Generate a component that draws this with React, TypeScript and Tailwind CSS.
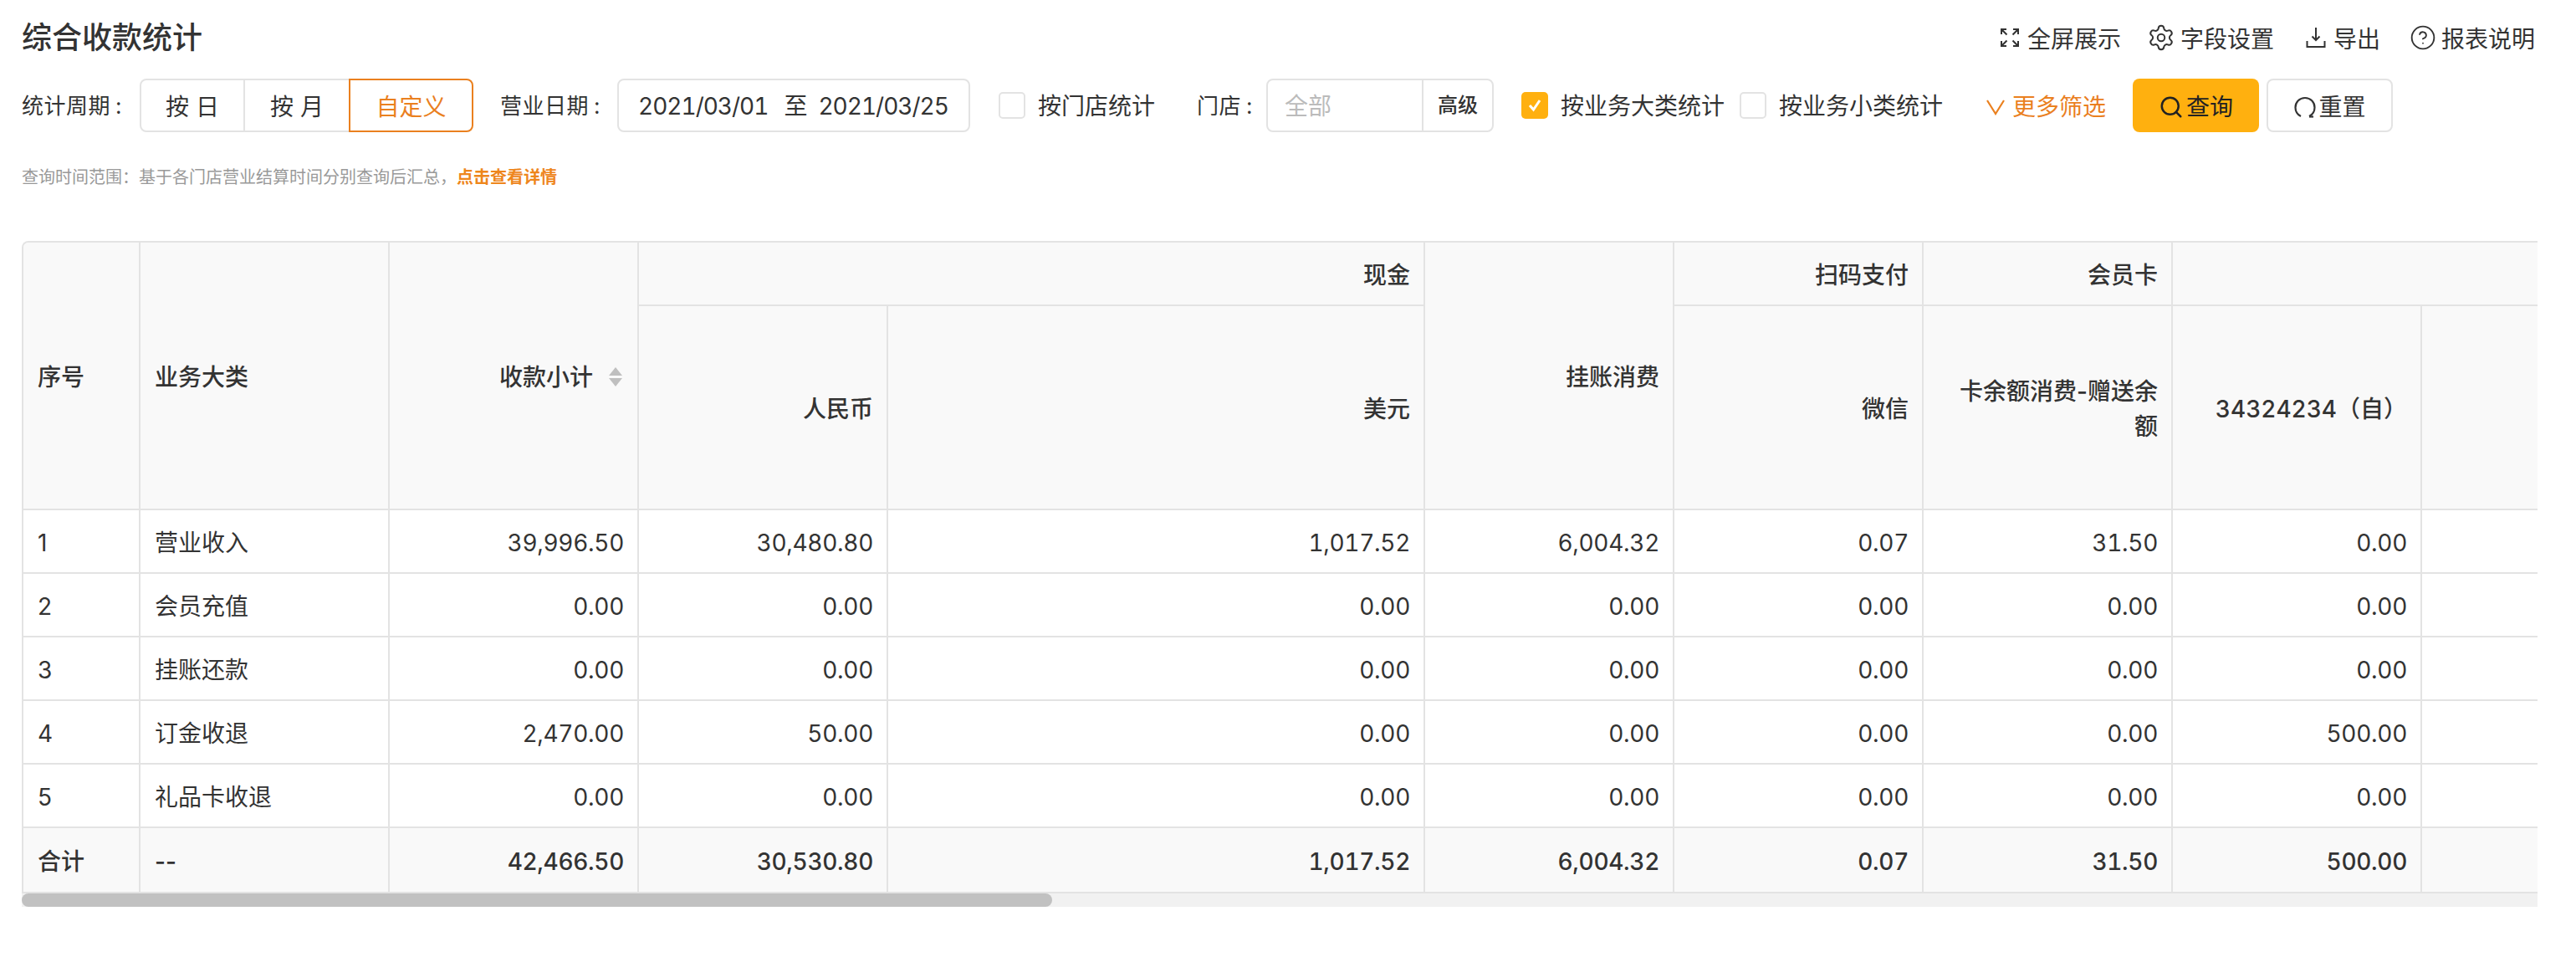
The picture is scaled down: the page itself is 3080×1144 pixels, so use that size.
import { CircleHelp, Search, Settings } from "lucide-react";
import type { ReactNode } from "react";

const rows = [
  ["1", "营业收入", "39,996.50", "30,480.80", "1,017.52", "6,004.32", "0.07", "31.50", "0.00"],
  ["2", "会员充值", "0.00", "0.00", "0.00", "0.00", "0.00", "0.00", "0.00"],
  ["3", "挂账还款", "0.00", "0.00", "0.00", "0.00", "0.00", "0.00", "0.00"],
  ["4", "订金收退", "2,470.00", "50.00", "0.00", "0.00", "0.00", "0.00", "500.00"],
  ["5", "礼品卡收退", "0.00", "0.00", "0.00", "0.00", "0.00", "0.00", "0.00"],
];
const totals = ["合计", "--", "42,466.50", "30,530.80", "1,017.52", "6,004.32", "0.07", "31.50", "500.00"];
const colWidths = [140, 298, 298, 298, 642, 298, 298, 298, 298, 298];

const thClass = "bg-[#f9f9f9] border-r-2 border-b-2 border-[#e3e3e3] pl-[17px] pr-[16px] pt-[3px] font-medium align-middle leading-[42px]";
const tdClass = "border-r-2 border-b-2 border-[#e3e3e3] pl-[17px] pr-[16px] pt-[3px] align-middle";
const numClass = "text-right tabular-nums tracking-[-0.3px]";

function Check({ checked, label }: { checked?: boolean; label: string }) {
  return (
    <div className="flex items-center gap-[15px]">
      <span
        className={
          checked
            ? "w-8 h-8 rounded-[5px] bg-[#ffb00f] flex items-center justify-center"
            : "w-8 h-8 rounded-[5px] border-2 border-[#e3e3e3] bg-white"
        }
      >
        {checked && (
          <svg width="20" height="20" viewBox="0 0 20 20" fill="none" stroke="white" strokeWidth="3">
            <path d="M4 10l4.500 5L16 4" />
          </svg>
        )}
      </span>
      <span className="pt-[2px] text-[28px] whitespace-nowrap">{label}</span>
    </div>
  );
}

function Action({ icon, label }: { icon: ReactNode; label: string }) {
  return (
    <div className="flex items-center gap-[9px] text-[28px]">
      {icon}
      <span className="pt-[3px]">{label}</span>
    </div>
  );
}

function FieldLabel({ text, className }: { text: string; className: string }) {
  return (
    <span className={`${className} flex items-center text-[26px] tracking-[0.5px] whitespace-nowrap`}>
      {text}
      <span className="ml-[6px]">:</span>
    </span>
  );
}

function App() {
  return (
    <div
      className="w-[3080px] h-[1144px] bg-white text-[#333333] px-[26px] overflow-hidden"
      style={{ fontFamily: 'Inter, "Noto Sans CJK SC", sans-serif' }}
    >
      <header className="h-[90px] flex items-center justify-between pr-[23px]">
        <h1 className="text-[36px] font-medium">综合收款统计</h1>
        <div className="flex items-center gap-[38px]">
          <div className="-mr-[4px]">
            <Action
              label="全屏展示"
              icon={
                <svg width="24" height="24" viewBox="0 0 24 24" fill="none" stroke="#333" strokeWidth="2">
                  <path d="M2 8V2h6M2 2l6.500 6.500M22 8V2h-6M22 2l-6.500 6.500M2 16v6h6M2 22l6.500-6.500M22 16v6h-6M22 22l-6.500-6.500" />
                </svg>
              }
            />
          </div>
          <Action label="字段设置" icon={<Settings size={34} strokeWidth={1.4} className="-mx-[3px]" />} />
          <Action
            label="导出"
            icon={
              <svg width="24" height="26" viewBox="0 0 24 26" fill="none" stroke="#333" strokeWidth="2">
                <path d="M12 1v15M7.500 11.500 12 16l4.500-4.500M1.500 17v7h21v-7" />
              </svg>
            }
          />
          <Action label="报表说明" icon={<CircleHelp size={32} strokeWidth={1.4} className="-mx-[3px]" />} />
        </div>
      </header>

      <div className="mt-1 h-16 flex items-center">
        <FieldLabel text="统计周期" className="w-[141px]" />
        <div className="flex h-16 text-[28px]">
          <div className="w-[126px] pt-[3px] border-2 border-[#e3e3e3] rounded-l-[8px] flex items-center justify-center">按 日</div>
          <div className="w-[126px] pt-[3px] border-y-2 border-r-2 border-[#e3e3e3] flex items-center justify-center">按 月</div>
          <div className="w-[149px] pt-[3px] border-2 border-[#ea801f] rounded-r-[8px] -ml-[2px] text-[#ea801f] flex items-center justify-center">自定义</div>
        </div>
        <FieldLabel text="营业日期" className="ml-[32px] w-[140px]" />
        <div className="w-[422px] h-16 pt-[2px] border-2 border-[#e3e3e3] rounded-[8px] flex items-center gap-[19px] pl-[23px] text-[28px] tabular-nums tracking-[-1px] whitespace-nowrap">
          <span>2021/03/01</span>
          <span className="-mr-[5px]">至</span>
          <span>2021/03/25</span>
        </div>
        <div className="ml-[34px]">
          <Check label="按门店统计" />
        </div>
        <FieldLabel text="门店" className="ml-[50px] w-[83px]" />
        <div className="w-[272px] h-16 border-2 border-[#e3e3e3] rounded-[8px] flex items-center">
          <span className="flex-1 pl-[20px] pt-[2px] text-[28px] text-[#bbbbbb]">全部</span>
          <span className="w-[84px] h-full border-l-2 border-[#e3e3e3] flex items-center justify-center text-[24px] font-medium">高级</span>
        </div>
        <div className="ml-[33px]">
          <Check checked label="按业务大类统计" />
        </div>
        <div className="ml-[18px]">
          <Check label="按业务小类统计" />
        </div>
        <div className="ml-[52px] flex items-center gap-[9px] text-[#ea801f] text-[28px] whitespace-nowrap">
          <svg width="22" height="20" viewBox="0 0 22 20" fill="none" stroke="#ea801f" strokeWidth="2.2" className="mt-[3px]">
            <path d="M1 2l10 16L21 2" />
          </svg>
          <span className="pt-[3px]">更多筛选</span>
        </div>
        <div className="ml-[32px] w-[151px] h-16 pt-[3px] rounded-[8px] bg-[#ffb00f] flex items-center justify-center gap-[3px] text-[28px] text-[#222222]">
          <Search size={30} strokeWidth={2} />
          <span>查询</span>
        </div>
        <div className="ml-[9px] w-[151px] h-16 pt-[3px] rounded-[8px] border-2 border-[#e3e3e3] flex items-center justify-center gap-1 text-[28px]">
          <svg width="26" height="26" viewBox="0 0 26 26" fill="none" stroke="#333" strokeWidth="2.2">
            <path d="M8 24C4 22 1.500 18 1.500 13.500 1.500 7 6.500 2 13 2s11.500 5 11.500 11.500c0 4.500-2.500 8.500-6.500 10.500" />
            <path d="M18 24.500h5" />
          </svg>
          <span>重置</span>
        </div>
      </div>

      <p className="mt-[42px] h-[24px] leading-[24px] text-[20px] text-[#999999] whitespace-nowrap">
        查询时间范围：基于各门店营业结算时间分别查询后汇总，
        <span className="text-[#ee861c] font-bold">点击查看详情</span>
      </p>

      <div className="mt-[64px] w-[3008px] h-[796px] overflow-hidden">
        <div className="border-t-2 border-l-2 border-[#e3e3e3] rounded-tl-[8px] overflow-hidden">
          <table className="w-[3166px] table-fixed border-separate border-spacing-0 text-[28px]">
            <colgroup>
              {colWidths.map((w, i) => (
                <col key={i} style={{ width: w }} />
              ))}
            </colgroup>
            <thead>
              <tr className="h-[76px]">
                <th rowSpan={2} className={`${thClass} text-left`}>序号</th>
                <th rowSpan={2} className={`${thClass} text-left`}>业务大类</th>
                <th rowSpan={2} className={`${thClass} text-right`}>
                  <div className="flex items-center justify-end gap-[19px] pr-[2px]">
                    <span>收款小计</span>
                    <span className="flex flex-col gap-[3px]">
                      <span className="w-0 h-0 border-x-[8px] border-x-transparent border-b-[10px] border-b-[#bfbfbf]" />
                      <span className="w-0 h-0 border-x-[8px] border-x-transparent border-t-[10px] border-t-[#bfbfbf]" />
                    </span>
                  </div>
                </th>
                <th colSpan={2} className={`${thClass} text-right`}>现金</th>
                <th rowSpan={2} className={`${thClass} text-right`}>挂账消费</th>
                <th className={`${thClass} text-right`}>扫码支付</th>
                <th className={`${thClass} text-right`}>会员卡</th>
                <th colSpan={2} className={thClass} />
              </tr>
              <tr className="h-[244px]">
                <th className={`${thClass} text-right`}>人民币</th>
                <th className={`${thClass} text-right`}>美元</th>
                <th className={`${thClass} text-right`}>微信</th>
                <th className={`${thClass} text-right !pl-[36px]`}>卡余额消费-赠送余额</th>
                <th className={`${thClass} text-right tabular-nums`}>34324234（自）</th>
                <th className={thClass} />
              </tr>
            </thead>
            <tbody>
              {rows.map((row) => (
                <tr key={row[0]} className="h-[76px]">
                  {row.map((cell, i) => (
                    <td key={i} className={`${tdClass} ${i < 2 ? "text-left" : numClass}`}>
                      {cell}
                    </td>
                  ))}
                  <td className={tdClass} />
                </tr>
              ))}
              <tr className="h-[78px] bg-[#f9f9f9] font-medium">
                {totals.map((cell, i) => (
                  <td key={i} className={`${tdClass} ${i < 2 ? "text-left" : numClass}`}>
                    {cell}
                  </td>
                ))}
                <td className={tdClass} />
              </tr>
            </tbody>
          </table>
        </div>
        <div className="h-4 bg-[#f1f1f1]">
          <div className="w-[1232px] h-full rounded-[8px] bg-[#c1c1c1]" />
        </div>
      </div>
    </div>
  );
}

export default App;
